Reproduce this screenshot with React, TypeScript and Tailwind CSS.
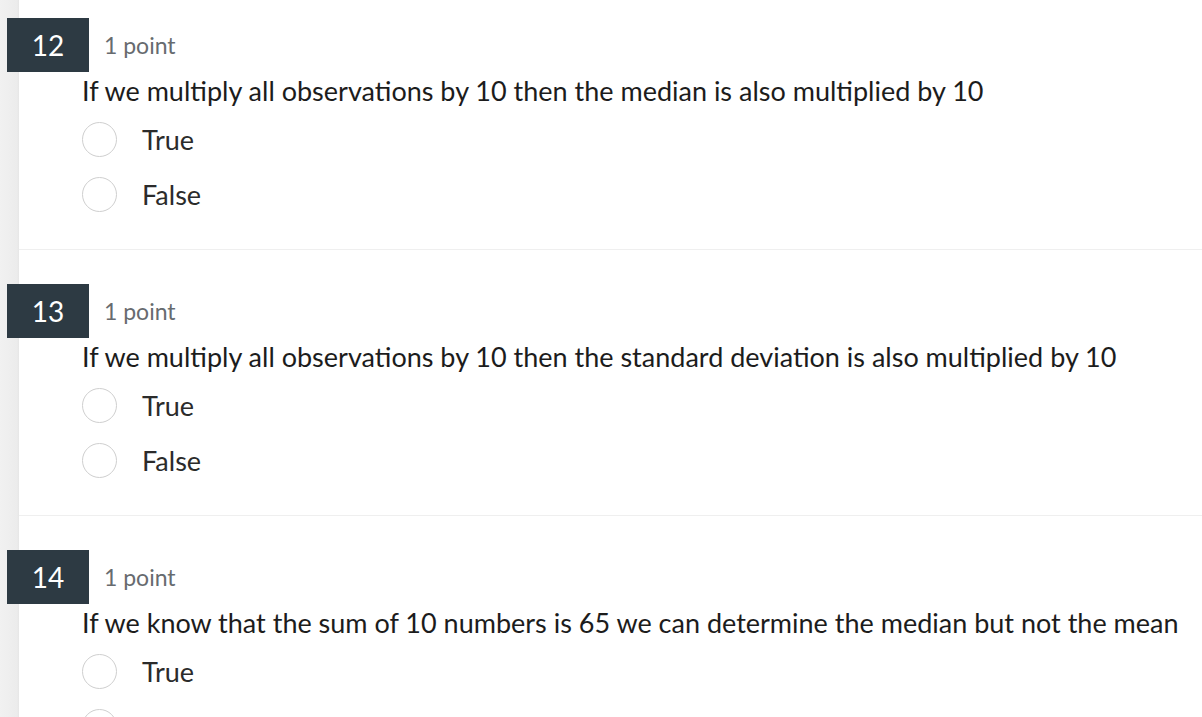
const questions = [
  {
    num: 12,
    text: "If we multiply all observations by 10 then the median is also multiplied by 10",
  },
  {
    num: 13,
    text: "If we multiply all observations by 10 then the standard deviation is also multiplied by 10",
  },
  {
    num: 14,
    text: "If we know that the sum of 10 numbers is 65 we can determine the median but not the mean",
  },
];

function Radio({ label }: { label: string }) {
  return (
    <label className="flex items-center gap-[25px] cursor-pointer">
      <span className="w-[35px] h-[35px] rounded-full border border-[#cfcfcf] bg-white shrink-0" />
      <span className="text-[27px] leading-[28px] text-[#2b2b2b]">{label}</span>
    </label>
  );
}

function Question({ num, text, last }: { num: number; text: string; last?: boolean }) {
  return (
    <section>
      <div className="flex items-center">
        <div className="w-[82px] h-[54px] bg-[#2d3a43] text-white text-[28px] flex items-center justify-center">
          {num}
        </div>
        <span className="ml-[15px] text-[23px] text-[#676b6f]">1 point</span>
      </div>
      <div className="ml-[75px]">
        <p className="mt-[5px] text-[27px] leading-[28px] text-[#1c1c1c] whitespace-nowrap">{text}</p>
        <div className="mt-[17px] flex flex-col gap-[20px]">
          <Radio label="True" />
          <Radio label="False" />
        </div>
      </div>
      {!last && <div className="ml-[12px] mt-[37px] mb-[34px] border-t border-[#efefef]" />}
    </section>
  );
}

export default function App() {
  return (
    <div
      className="h-[717px] overflow-hidden bg-[linear-gradient(to_right,#f1f1f1_0px,#ececec_17px,#e6e6e6_19px,#ffffff_19px)] pl-[7px] pt-[18px]"
      style={{ fontFamily: "Lato, 'Noto Sans', sans-serif" }}
    >
      {questions.map((q, i) => (
        <Question key={q.num} num={q.num} text={q.text} last={i === questions.length - 1} />
      ))}
    </div>
  );
}
